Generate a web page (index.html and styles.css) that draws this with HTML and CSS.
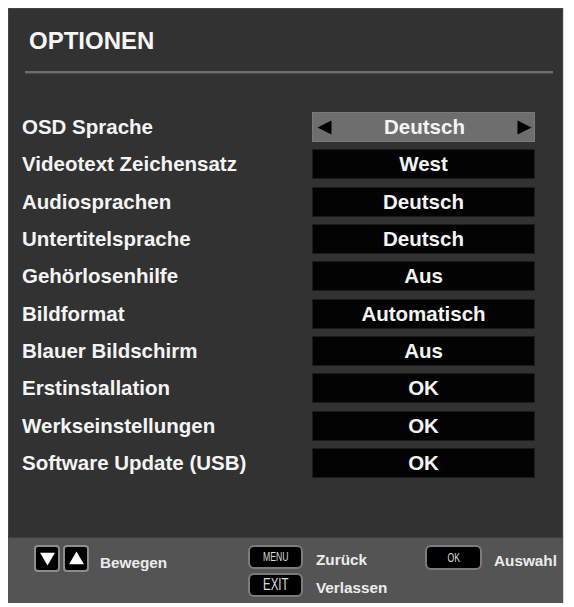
FILE: index.html
```html
<!DOCTYPE html>
<html lang="de">
<head>
<meta charset="utf-8">
<title>Optionen</title>
<link rel="stylesheet" href="styles.css">
</head>
<body>
<div class="panel">
  <div class="header">
    <h1 class="title">OPTIONEN</h1>
    <div class="divider"></div>
  </div>
  <div class="rows">
    <div class="label">OSD Sprache</div>
    <div class="value active">
      <svg class="arrow" viewBox="0 0 15 15" width="15" height="15"><polygon points="0.5,7.5 14.5,0.5 14.5,14.5" fill="#000"/></svg>
      <span>Deutsch</span>
      <svg class="arrow" viewBox="0 0 15 15" width="15" height="15"><polygon points="14.5,7.5 0.5,0.5 0.5,14.5" fill="#000"/></svg>
    </div>
    <div class="label">Videotext Zeichensatz</div>
    <div class="value"><span>West</span></div>
    <div class="label">Audiosprachen</div>
    <div class="value"><span>Deutsch</span></div>
    <div class="label">Untertitelsprache</div>
    <div class="value"><span>Deutsch</span></div>
    <div class="label">Gehörlosenhilfe</div>
    <div class="value"><span>Aus</span></div>
    <div class="label">Bildformat</div>
    <div class="value"><span>Automatisch</span></div>
    <div class="label">Blauer Bildschirm</div>
    <div class="value"><span>Aus</span></div>
    <div class="label">Erstinstallation</div>
    <div class="value"><span>OK</span></div>
    <div class="label">Werkseinstellungen</div>
    <div class="value"><span>OK</span></div>
    <div class="label">Software Update (USB)</div>
    <div class="value"><span>OK</span></div>
  </div>
  <div class="footer">
    <div class="group">
      <div class="keys">
        <div class="key arrowkey"><svg viewBox="0 0 16 16" width="17" height="17"><polygon points="1,2.5 15,2.5 8,14.5" fill="#fff"/></svg></div>
        <div class="key arrowkey"><svg viewBox="0 0 16 16" width="17" height="17"><polygon points="1,13.5 15,13.5 8,1.5" fill="#fff"/></svg></div>
      </div>
      <div class="hint first">Bewegen</div>
    </div>
    <div class="group stack">
      <div class="pair">
        <div class="key btn menu"><span class="cond">MENU</span></div>
        <div class="hint">Zurück</div>
      </div>
      <div class="pair">
        <div class="key btn exit"><span class="cond">EXIT</span></div>
        <div class="hint">Verlassen</div>
      </div>
    </div>
    <div class="group">
      <div class="pair">
        <div class="key btn ok"><span class="cond">OK</span></div>
        <div class="hint">Auswahl</div>
      </div>
    </div>
  </div>
</div>
</body>
</html>
```
FILE: styles.css
```css
html, body {
  background: #ffffff;
}
body {
  margin: 8px;
  font-family: "Liberation Sans", Arial, sans-serif;
}
.panel {
  width: 555px;
  height: 595px;
  background: #323232;
  box-shadow: inset 0 0 0 1px #454545, 0 0 0 1px #d8d8d8;
  display: flex;
  flex-direction: column;
  color: #f4f4f4;
}
.header {
  padding: 19px 0 0 21px;
}
.title {
  margin: 0;
  font-size: 24px;
  line-height: 28px;
  font-weight: bold;
  color: #f6f6f6;
}
.divider {
  height: 2px;
  margin: 16px 10px 0 -4px;
  background: #6c6c6c;
  border-bottom: 1px solid #4a4a4a;
}
.rows {
  margin-top: 38px;
  padding: 0 28px 0 14px;
  display: grid;
  grid-template-columns: 1fr 223px;
  grid-auto-rows: 30px;
  row-gap: 7.33px;
  align-items: center;
}
.label {
  font-size: 20.5px;
  font-weight: bold;
  line-height: 30px;
  white-space: nowrap;
}
.value {
  height: 30px;
  background: #030303;
  box-shadow: inset 0 0 0 1px #1c1c1c;
  display: flex;
  align-items: center;
  justify-content: center;
  font-size: 20.5px;
  font-weight: bold;
}
.value.active {
  background: #6e6e6e;
  box-shadow: inset 0 0 0 1px #7a7a7a;
  justify-content: space-between;
  padding: 0 3px 0 5px;
}
.arrow {
  display: block;
}
.footer {
  margin-top: auto;
  height: 66px;
  background: #545454;
  border-top: 1px solid #3e3e3e;
  box-sizing: border-box;
  padding: 7px 0 0 26px;
  display: grid;
  grid-template-columns: 214px 177px auto;
  align-items: start;
}
.group {
  display: flex;
  align-items: flex-start;
}
.group.stack {
  flex-direction: column;
  gap: 4px;
}
.keys {
  display: flex;
  gap: 3px;
}
.key {
  background: #000;
  box-sizing: border-box;
  border: 2px solid #8e8e8e;
  display: flex;
  align-items: center;
  justify-content: center;
}
.arrowkey {
  width: 26px;
  height: 27px;
  border-radius: 4px;
}
.arrowkey svg {
  display: block;
}
.pair {
  display: flex;
  align-items: center;
}
.btn {
  height: 24px;
  border-radius: 6px;
  border-color: #7c7c7c;
  color: #dcdcdc;
}
.menu, .exit {
  width: 55px;
}
.ok {
  width: 57px;
  height: 25px;
}
.cond {
  display: inline-block;
  transform: scaleX(0.72);
  font-family: "Liberation Sans", Arial, sans-serif;
}
.menu .cond {
  font-size: 12px;
}
.exit .cond {
  font-size: 16px;
}
.ok .cond {
  font-size: 12px;
}
.hint {
  font-size: 15.3px;
  font-weight: bold;
  color: #ececec;
  margin-left: 13px;
  padding-top: 6px;
  white-space: nowrap;
}
.hint.first {
  margin-left: 11px;
  padding-top: 9px;
}
.ok + .hint {
  margin-left: 12px;
}
```
